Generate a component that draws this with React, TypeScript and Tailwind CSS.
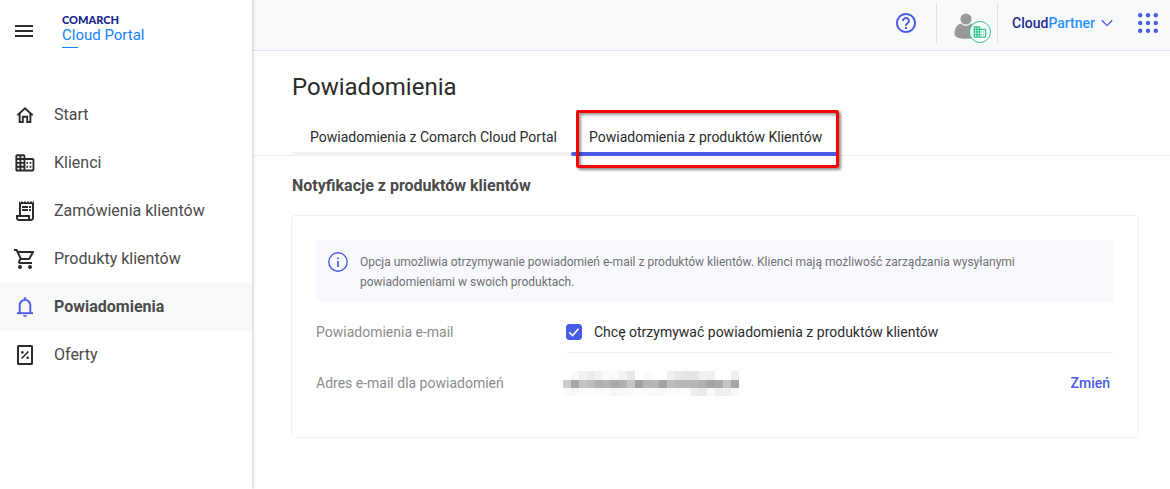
import type { ReactNode } from "react";
import {
  MdMenu,
  MdOutlineReceiptLong,
  MdOutlineShoppingCart,
  MdHelpOutline,
} from "react-icons/md";

function HomeIcon() {
  return (
    <svg viewBox="0 0 18 18" className="size-[18px]" fill="none" stroke="currentColor" strokeWidth="1.9">
      <path d="M1.400 9.200L9 2.200l7.600 7" />
      <path d="M3.600 7.600V16h3.200v-5.200h4.400V16h3.200V7.600" />
    </svg>
  );
}

function BuildingIcon({ className }: { className?: string }) {
  return (
    <svg viewBox="0 0 22 20" className={className} fill="none" stroke="currentColor" strokeWidth="2.1">
      <rect x="1.4" y="1.4" width="9" height="17" rx="1" />
      <path d="M5.9 1.4v17M1.4 5.6h9M1.4 9.9h9M1.4 14.2h9" />
      <path d="M10.4 5.6h8.8a1.2 1.2 0 0 1 1.2 1.2v10.4a1.2 1.2 0 0 1-1.2 1.2h-8.8" />
      <path d="M12.6 9.9h1.8M16.2 9.9h1.8M12.6 14.2h1.8M16.2 14.2h1.8" />
    </svg>
  );
}

function BellIcon() {
  return (
    <svg viewBox="0 0 18 20" className="h-5 w-[18px]" fill="none" stroke="currentColor" strokeWidth="1.900">
      <path d="M3.700 16V8.200a5.300 5.300 0 0 1 10.600 0V16" />
      <path d="M1 16.200h16" />
      <path d="M9 .4v2.4" strokeWidth="2.4" />
      <path d="M7 18.200h4a2 1.700 0 0 1-4 0z" fill="currentColor" stroke="none" />
    </svg>
  );
}

function OfferIcon() {
  return (
    <svg viewBox="0 0 18 20" className="h-5 w-[18px]" fill="none" stroke="currentColor" strokeWidth="2">
      <rect x="2" y="1" width="14" height="18" rx=".5" />
      <path d="M5.6 13.6l6.8-7.2" strokeWidth="1.5" />
      <circle cx="6.4" cy="7.4" r="1.3" fill="currentColor" stroke="none" />
      <circle cx="11.7" cy="12.7" r="1.3" fill="currentColor" stroke="none" />
    </svg>
  );
}

function NavItem({ icon, label, active }: { icon: ReactNode; label: string; active?: boolean }) {
  return (
    <a
      href="#"
      className={
        active
          ? "flex h-12 items-center gap-[17px] bg-[#f8f9fb] px-[13px] font-bold text-[#4a4a4a]"
          : "flex h-12 items-center gap-[17px] px-[13px] text-[#4a4a4a]"
      }
    >
      <span className={active ? "flex w-6 justify-center text-[#4a5be6]" : "flex w-6 justify-center text-[#2b2b2b]"}>
        {icon}
      </span>
      {label}
    </a>
  );
}

function Sidebar() {
  return (
    <aside className="z-10 min-h-screen w-[252px] shrink-0 bg-white shadow-[1px_0_3px_rgba(0,0,0,0.2)]">
      <div className="flex h-[91px] items-start gap-[26px] px-3 pt-[14px]">
        <button aria-label="Menu" className="mt-[5px] text-[#2b2b2b]">
          <MdMenu className="size-6" />
        </button>
        <a href="#" className="flex flex-col">
          <span className="font-['Lato'] text-[11px] leading-3 font-black text-[#14248a]">COMARCH</span>
          <span className="text-[15px] leading-[18px] text-[#1583fb]">Cloud Portal</span>
          <span className="mt-[3px] h-px w-4 bg-[#1583fb]" />
        </a>
      </div>
      <nav>
        <NavItem label="Start" icon={<HomeIcon />} />
        <NavItem label="Klienci" icon={<BuildingIcon className="h-[18px] w-5" />} />
        <NavItem label="Zamówienia klientów" icon={<MdOutlineReceiptLong className="size-6" />} />
        <NavItem label="Produkty klientów" icon={<MdOutlineShoppingCart className="size-6" />} />
        <NavItem label="Powiadomienia" icon={<BellIcon />} active />
        <NavItem label="Oferty" icon={<OfferIcon />} />
      </nav>
    </aside>
  );
}

function TopBar() {
  return (
    <header className="flex h-[51px] items-start justify-end border-b border-[#dfe1f6] bg-[#f8f9fb] pt-[3px] pr-3 text-[#4a5be6]">
      <button aria-label="Pomoc" className="flex h-10 items-center pr-[18px]">
        <MdHelpOutline className="size-6" />
      </button>
      <div className="flex h-10 w-[62px] justify-center border-x border-[#dfe1f6]">
        <button aria-label="Konto" className="relative h-10 w-10">
          <svg viewBox="0 0 40 40" className="size-10" fill="#999">
            <circle cx="19" cy="16" r="5.6" />
            <path d="M7.500 31c0-6 2.500-9.500 6.500-10.500 1.500 1.700 3.200 2.300 5 2.300s3.500-.6 5-2.300c4 1 6.500 4.500 6.500 10.500 0 2.800-4 4.800-11.500 4.800S7.500 33.800 7.500 31z" />
          </svg>
          <span className="absolute top-[18px] left-[22px] flex size-[22px] items-center justify-center rounded-full border border-[#2fc28b] bg-white text-[#2fc28b]">
            <BuildingIcon className="h-3 w-[14px]" />
          </span>
        </button>
      </div>
      <button className="flex h-10 items-center pl-[14px] text-sm font-medium">
        <span className="text-[#1d2c8c]">Cloud</span>
        <span className="text-[#2a91fc]">Partner</span>
        <svg viewBox="0 0 12 8" className="ml-[6px] h-2 w-3" fill="none" stroke="currentColor" strokeWidth="1.3">
          <path d="M.8 1.200L6 6.600l5.200-5.400" />
        </svg>
      </button>
      <button aria-label="Aplikacje" className="ml-[25px] flex h-10 items-center">
        <svg viewBox="0 0 20 20" className="size-5" fill="currentColor">
          {[2.2, 10, 17.8].map((y) =>
            [2.2, 10, 17.8].map((x) => <circle key={`${x}-${y}`} cx={x} cy={y} r="2.2" />)
          )}
        </svg>
      </button>
    </header>
  );
}

// grey levels of the blurred-out address, one row of blocks per line
const MOSAIC = [
  [255, 250, 242, 236, 243, 250, 250, 243, 232, 255, 250, 254, 255, 240, 232, 229, 229, 242, 240, 255, 255, 240],
  [205, 165, 196, 188, 176, 180, 170, 176, 197, 160, 182, 182, 163, 188, 184, 184, 182, 176, 166, 170, 197, 166],
  [251, 248, 251, 252, 252, 252, 247, 248, 250, 252, 249, 249, 249, 251, 251, 251, 238, 235, 250, 238, 241, 249],
];

function HiddenEmail() {
  return (
    <svg viewBox="0 0 176 25" className="-ml-[3px] h-[25px] w-44" shapeRendering="crispEdges" role="img" aria-label="Ukryty adres e-mail">
      {MOSAIC.map((row, r) =>
        row.map((v, c) => (
          <rect key={`${r}-${c}`} x={c * 8} y={r === 0 ? 0 : 1 + r * 8} width="8" height={r === 0 ? 9 : 8} fill={`rgb(${v},${v},${v})`} />
        ))
      )}
    </svg>
  );
}

function Tabs() {
  return (
    <div role="tablist" className="flex border-b border-[#f0f0f0] pl-10 text-sm text-[#2b2b2b]">
      <button role="tab" aria-selected="false" className="-mb-px h-[45px] rounded-l-sm border-b-4 border-[#f2f2f2] pt-3 pr-[14px] pb-px pl-[18px]">
        Powiadomienia z Comarch Cloud Portal
      </button>
      <div className="relative -mb-px">
        <button role="tab" aria-selected="true" className="relative h-[45px] pt-3 pr-[17px] pb-[5px] pl-[18px]">
          Powiadomienia z produktów Klientów
          <span className="absolute bottom-0 left-0 h-1 w-full rounded-full bg-[#4a5be6]" />
        </button>
        <span className="pointer-events-none absolute -top-px right-0 -bottom-3 left-[5px] rounded-xs border-3 border-[#fe0000] shadow-[2px_2px_3px_rgba(0,0,0,0.45),inset_2px_2px_3px_rgba(0,0,0,0.4)]" />
      </div>
    </div>
  );
}

export default function App() {
  return (
    <div className="flex min-h-screen bg-white font-['Roboto',sans-serif] text-base">
      <Sidebar />
      <div className="min-w-0 flex-1">
        <TopBar />
        <main>
          <h1 className="pt-5 pb-2 pl-10 text-2xl leading-8 text-[#2b2b2b]">Powiadomienia</h1>
          <Tabs />
          <section className="pt-[18px] pr-8 pl-10">
            <h2 className="text-base leading-6 font-bold text-[#4a4a4a]">Notyfikacje z produktów klientów</h2>
            <div className="-mx-px mt-[17px] rounded-sm border border-[#f0f0f0] p-6">
              <div className="flex gap-3 rounded-xs bg-[#f8f9fe] px-3 pt-3 pb-[10px] text-xs leading-5 text-[#707070]">
                <svg viewBox="0 0 20 20" className="size-5 shrink-0" fill="none" stroke="#4a5be6" strokeWidth="1.4">
                  <circle cx="10" cy="10" r="9.2" />
                  <path d="M10 9v6M10 5.500v1.800" strokeWidth="1.7" />
                </svg>
                <p className="max-w-[670px]">
                  Opcja umożliwia otrzymywanie powiadomień e-mail z produktów klientów. Klienci mają możliwość zarządzania
                  wysyłanymi powiadomieniami w swoich produktach.
                </p>
              </div>
              <div className="mt-[10px] flex h-[41px] text-sm">
                <div className="flex w-[250px] shrink-0 items-center pb-px text-[#8c8c8c]">Powiadomienia e-mail</div>
                <label className="flex flex-1 items-center gap-3 border-b border-[#f0f0f0] text-[#2b2b2b]">
                  <span className="relative flex size-4">
                    <input type="checkbox" defaultChecked className="size-4 appearance-none rounded-[3px] border border-[#4a5be6] checked:bg-[#4a5be6]" />
                    <svg viewBox="0 0 16 16" className="pointer-events-none absolute inset-0 size-4" fill="none" stroke="#fff" strokeWidth="1.6">
                      <path d="M3.200 8.300l3.300 3.200 6-6.800" />
                    </svg>
                  </span>
                  Chcę otrzymywać powiadomienia z produktów klientów
                </label>
              </div>
              <div className="flex h-[60px] items-center text-sm">
                <div className="w-[250px] shrink-0 text-[#8c8c8c]">Adres e-mail dla powiadomień</div>
                <HiddenEmail />
                <button className="mr-1 ml-auto font-medium text-[#4a5be6]">Zmień</button>
              </div>
            </div>
          </section>
        </main>
      </div>
    </div>
  );
}
